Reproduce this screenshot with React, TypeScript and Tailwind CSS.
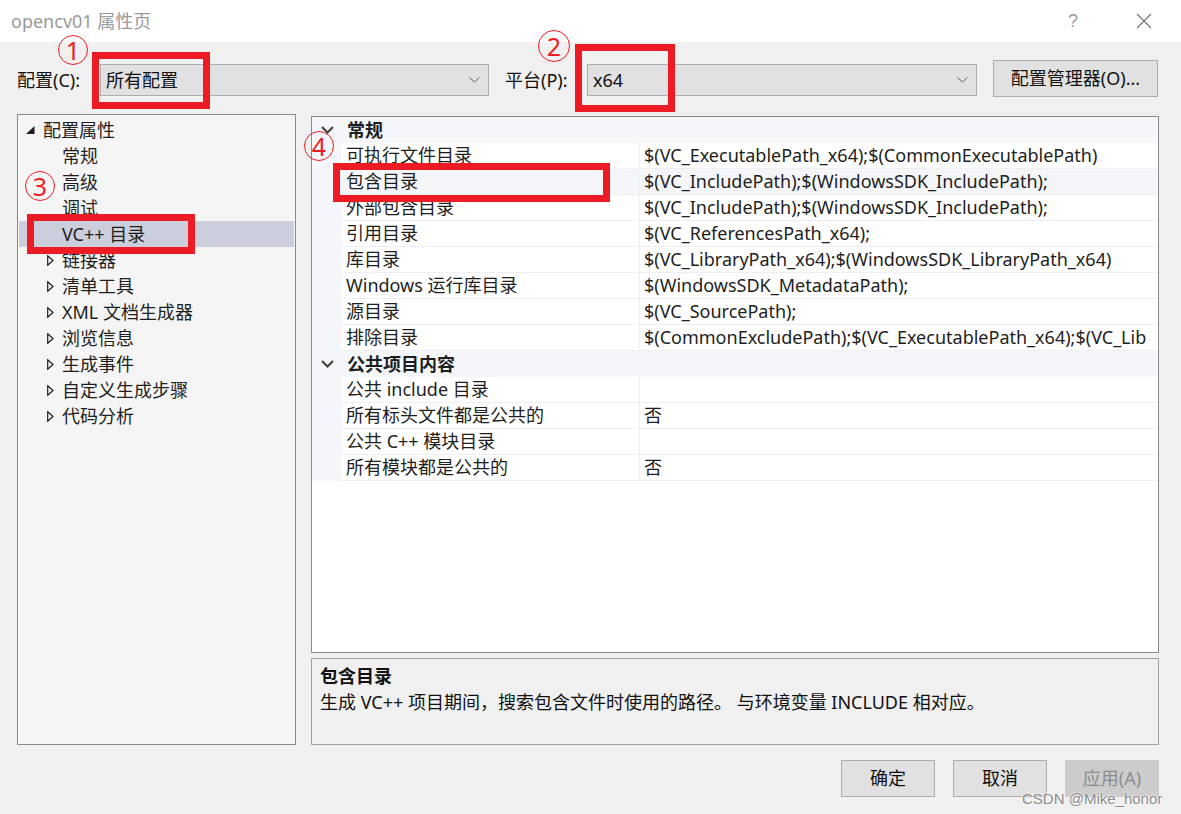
import React from "react";

const tree = [
  { label: "配置属性", level: 0 },
  { label: "常规", level: 1 },
  { label: "高级", level: 1 },
  { label: "调试", level: 1 },
  { label: "VC++ 目录", level: 1, selected: true },
  { label: "链接器", level: 1, more: true },
  { label: "清单工具", level: 1, more: true },
  { label: "XML 文档生成器", level: 1, more: true },
  { label: "浏览信息", level: 1, more: true },
  { label: "生成事件", level: 1, more: true },
  { label: "自定义生成步骤", level: 1, more: true },
  { label: "代码分析", level: 1, more: true },
];

const general = [
  ["可执行文件目录", "$(VC_ExecutablePath_x64);$(CommonExecutablePath)"],
  ["包含目录", "$(VC_IncludePath);$(WindowsSDK_IncludePath);"],
  ["外部包含目录", "$(VC_IncludePath);$(WindowsSDK_IncludePath);"],
  ["引用目录", "$(VC_ReferencesPath_x64);"],
  ["库目录", "$(VC_LibraryPath_x64);$(WindowsSDK_LibraryPath_x64)"],
  ["Windows 运行库目录", "$(WindowsSDK_MetadataPath);"],
  ["源目录", "$(VC_SourcePath);"],
  ["排除目录", "$(CommonExcludePath);$(VC_ExecutablePath_x64);$(VC_Lib"],
];

const publicItems = [
  ["公共 include 目录", ""],
  ["所有标头文件都是公共的", "否"],
  ["公共 C++ 模块目录", ""],
  ["所有模块都是公共的", "否"],
];

function ComboChevron() {
  return (
    <svg width="11" height="6" viewBox="0 0 11 6" className="shrink-0">
      <polyline points="0.5,0.5 5.5,5 10.5,0.5" fill="none" stroke="#606060" strokeWidth="1" />
    </svg>
  );
}

function Combo({ value, width }: { value: string; width: string }) {
  return (
    <div className={`${width} h-[32px] bg-[#e1e1e1] border border-[#adadad] flex items-center pl-[5px] pr-[8px]`}>
      <span className="flex-1 text-[18px] text-[#111]">{value}</span>
      <ComboChevron />
    </div>
  );
}

function Category({ label }: { label: string }) {
  return (
    <div className="h-[26px] bg-[#f4f6fa] flex items-center shrink-0">
      <svg width="13" height="8" viewBox="0 0 13 8" className="ml-[9px]">
        <polyline points="1,1 6.5,6.5 12,1" fill="none" stroke="#444" strokeWidth="2.2" />
      </svg>
      <span className="ml-[13px] font-bold text-[18px] text-[#1e1e1e]">{label}</span>
    </div>
  );
}

function PropRow({ label, value, selected }: { label: string; value: string; selected?: boolean }) {
  return (
    <div className="h-[26px] flex shrink-0">
      <div className="w-[29px] bg-[#f4f6fa]" />
      <div className={`w-[298px] border-b border-[#efeff2] pl-[5px] flex items-center ${selected ? "bg-[#f5f6f9]" : ""}`}>
        <span className="text-[18px] text-[#1e1e1e] whitespace-nowrap">{label}</span>
      </div>
      <div className={`flex-1 min-w-0 border-b border-l border-[#efeff2] pl-[4px] flex items-center overflow-hidden ${selected ? "bg-[#f5f6f9]" : ""}`}>
        <span className="text-[18px] text-[#1e1e1e] whitespace-nowrap">{value}</span>
      </div>
    </div>
  );
}

function Circled({ n, className }: { n: string; className: string }) {
  return (
    <div className={`absolute rounded-full border-[1.5px] border-[#ee1c25] flex items-center justify-center text-[#ee1c25] text-[25px] leading-none ${className}`}>
      <span className="mt-[1px]">{n}</span>
    </div>
  );
}

function Box({ className }: { className: string }) {
  return <div className={`absolute border-[7px] border-[#ed1c24] ${className}`} />;
}

function Button({ children, disabled }: { children: React.ReactNode; disabled?: boolean }) {
  return (
    <div
      className={`w-[94px] h-[37px] flex items-center justify-center text-[18px] border ${
        disabled ? "bg-[#cccccc] border-[#cccccc] text-[#8c8c8c]" : "bg-[#e1e1e1] border-[#adadad] text-[#111]"
      }`}
    >
      {children}
    </div>
  );
}

export default function App() {
  return (
    <div className="relative w-[1181px] h-[814px] overflow-hidden bg-[#f0f0f0] font-['Noto_Sans','Noto_Sans_CJK_SC',sans-serif] flex flex-col">
      {/* title bar */}
      <div className="h-[42px] bg-white flex items-center pl-[11px] shrink-0">
        <span className="text-[18px] text-[#9a9a9a] flex-1">opencv01 属性页</span>
        <span className="text-[18px] text-[#9a9a9a] mr-[58px] font-['Liberation_Sans',sans-serif]">?</span>
        <svg width="16" height="16" viewBox="0 0 16 16" className="mr-[29px]">
          <line x1="1" y1="1" x2="15" y2="15" stroke="#777" strokeWidth="1.2" />
          <line x1="15" y1="1" x2="1" y2="15" stroke="#777" strokeWidth="1.2" />
        </svg>
      </div>

      {/* config row */}
      <div className="flex items-end h-[37px] mt-[17px] px-[17px] shrink-0">
        <div className="w-[83px] h-[32px] flex items-center text-[18px] text-[#111]">配置(C):</div>
        <Combo value="所有配置" width="w-[389px]" />
        <div className="ml-[16px] w-[82px] h-[32px] flex items-center text-[18px] text-[#111]">平台(P):</div>
        <Combo value="x64" width="w-[390px]" />
        <div className="ml-[16px] w-[165px] h-[37px] mb-[-1px] bg-[#e1e1e1] border border-[#adadad] flex items-center justify-center text-[18px] text-[#111]">
          配置管理器(O)...
        </div>
      </div>

      {/* main */}
      <div className="flex mt-[18px] px-[17px] gap-[15px] shrink-0">
        <div className="w-[279px] h-[631px] bg-[#f5f5f5] border border-[#8a8a90] p-[1px] pt-[2px]">
          {tree.map((t) => (
            <div
              key={t.label}
              className={`h-[26px] flex items-center ${t.level === 0 ? "pl-[7px]" : "pl-[28px]"} ${
                t.selected ? "bg-[#cccedb]" : ""
              }`}
            >
              <div className={`${t.level === 0 ? "w-[17px]" : "w-[15px]"} flex items-center`}>
                {t.level === 0 && (
                  <svg width="9" height="8" viewBox="0 0 9 8">
                    <polygon points="8.5,0 8.5,8 0,8" fill="#1e1e1e" />
                  </svg>
                )}
                {t.more && (
                  <svg width="7" height="11" viewBox="0 0 7 11">
                    <polygon points="0.7,0.7 6,5.5 0.7,10.3" fill="none" stroke="#1e1e1e" strokeWidth="1.2" />
                  </svg>
                )}
              </div>
              <span className="text-[18px] text-[#1e1e1e] whitespace-nowrap">{t.label}</span>
            </div>
          ))}
        </div>

        <div className="w-[848px] pt-[2px] flex flex-col">
          <div className="h-[537px] bg-white border border-[#8a8a90] flex flex-col overflow-hidden">
            <Category label="常规" />
            {general.map(([l, v]) => (
              <PropRow key={l} label={l} value={v} selected={l === "包含目录"} />
            ))}
            <Category label="公共项目内容" />
            {publicItems.map(([l, v]) => (
              <PropRow key={l} label={l} value={v} />
            ))}
          </div>
          <div className="mt-[5px] h-[87px] border border-[#a0a0a0] bg-[#f0f0f0] px-[8px] pt-[4px] text-[#111]">
            <div className="font-bold text-[18px] leading-[26px]">包含目录</div>
            <div className="text-[18px] leading-[26px]">生成 VC++ 项目期间，搜索包含文件时使用的路径。 与环境变量 INCLUDE 相对应。</div>
          </div>
        </div>
      </div>

      {/* buttons */}
      <div className="flex justify-end gap-[18px] mt-[15px] pr-[22px] shrink-0">
        <Button>确定</Button>
        <Button>取消</Button>
        <Button disabled>应用(A)</Button>
      </div>

      {/* annotations */}
      <Box className="left-[92px] top-[52px] w-[118px] h-[57px]" />
      <Box className="left-[575px] top-[44px] w-[100px] h-[68px]" />
      <Box className="left-[27px] top-[214px] w-[168px] h-[40px]" />
      <Box className="left-[333px] top-[163px] w-[277px] h-[39px]" />
      <Circled n="1" className="left-[58px] top-[35px] w-[30px] h-[30px]" />
      <Circled n="2" className="left-[538px] top-[30px] w-[32px] h-[32px]" />
      <Circled n="3" className="left-[25px] top-[171px] w-[30px] h-[30px]" />
      <Circled n="4" className="left-[304px] top-[131px] w-[30px] h-[30px]" />

      <div className="absolute left-[1022px] top-[788px] text-[15px] text-[#8a8a8a] font-['Liberation_Sans',sans-serif] [text-shadow:0_0_2px_#fff,0_0_2px_#fff]">
        CSDN @Mike_honor
      </div>
    </div>
  );
}
